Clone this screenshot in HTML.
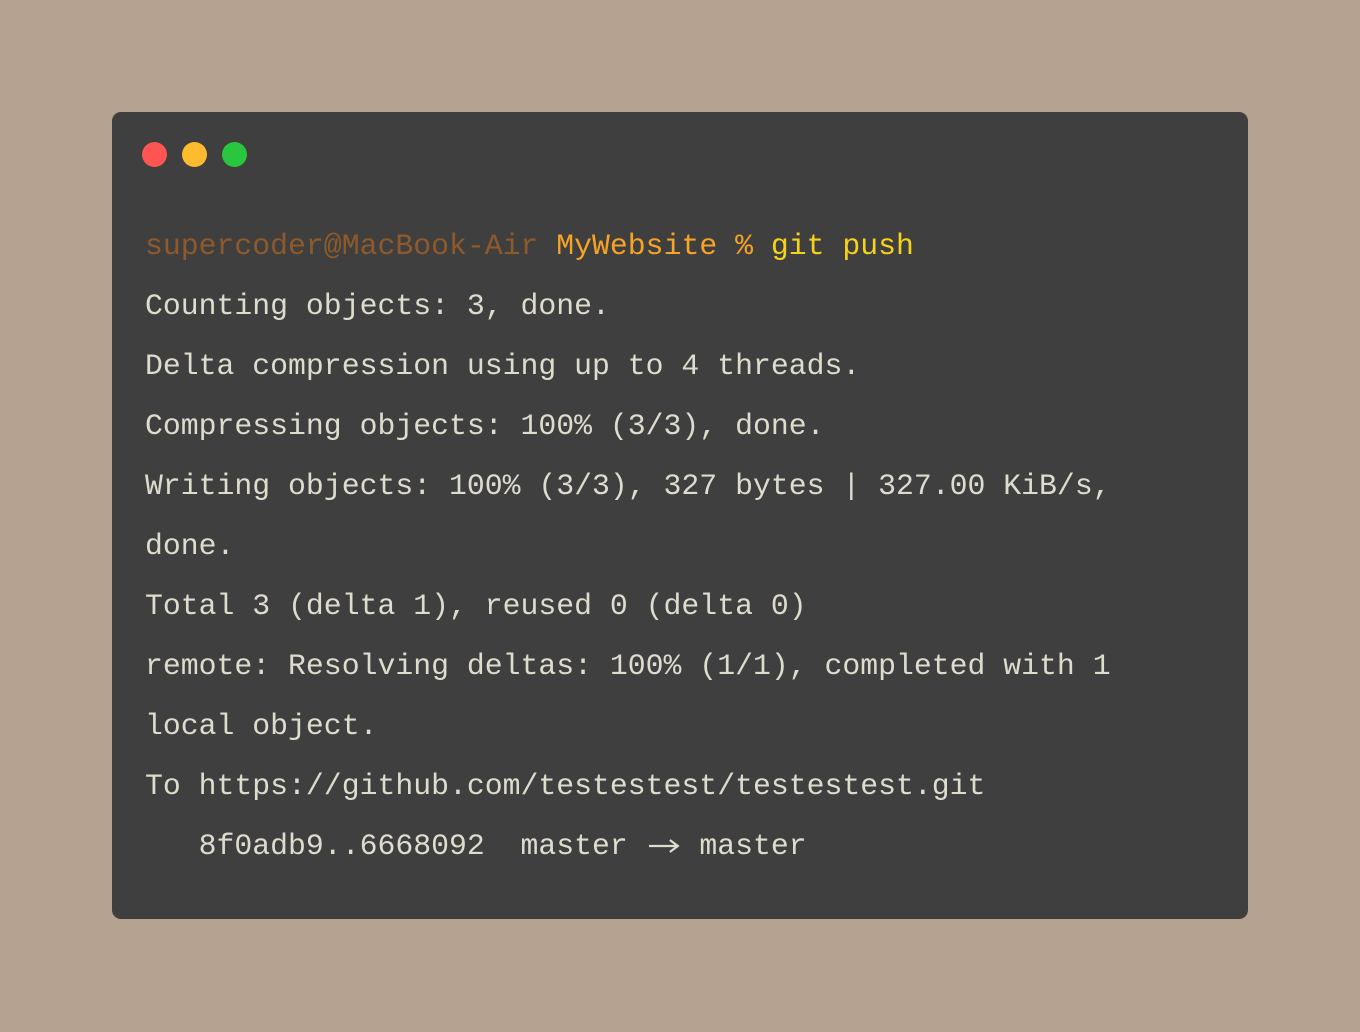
<!DOCTYPE html>
<html><head><meta charset="utf-8"><style>
html,body{margin:0;padding:0}
body{width:1360px;height:1032px;background:#b5a290;position:relative;overflow:hidden}
.card{position:absolute;left:112px;top:112px;width:1136px;height:807px;background:#3f3f3f;border-radius:9px}
.dot{position:absolute;top:142px;width:25px;height:25px;border-radius:50%}
.t{position:absolute;left:145px;margin:0;font-family:"Liberation Mono",monospace;font-size:29.8px;color:#dedccd;white-space:pre;line-height:60px}
.ar{display:inline-block;width:35.8px;height:20px;vertical-align:middle}
</style></head><body>
<div class="card"></div>
<div class="dot" style="left:142px;background:#fe5552"></div>
<div class="dot" style="left:182px;background:#febb2e"></div>
<div class="dot" style="left:222px;background:#28c73f"></div>
<pre class="t" style="top:216px"><span style="color:#8e5a2c">supercoder@MacBook-Air</span> <span style="color:#f7a325">MyWebsite %</span> <span style="color:#f5d21c">git push</span>
Counting objects: 3, done.
Delta compression using up to 4 threads.
Compressing objects: 100% (3/3), done.
Writing objects: 100% (3/3), 327 bytes | 327.00 KiB/s,
done.
Total 3 (delta 1), reused 0 (delta 0)
remote: Resolving deltas: 100% (1/1), completed with 1
local object.
To https://github.com/testestest/testestest.git
   8f0adb9..6668092  master <svg class="ar" viewBox="0 0 36 20"><path d="M3 10H32M24 4L32 10L24 16" fill="none" stroke="#dedccd" stroke-width="2.2"/></svg> master</pre>
</body></html>
